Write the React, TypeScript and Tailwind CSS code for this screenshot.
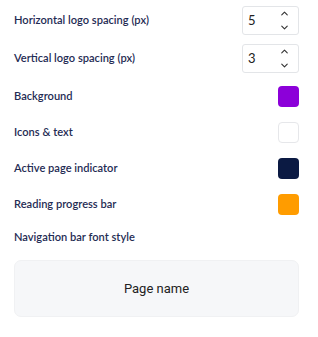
import { ChevronUp, ChevronDown } from 'lucide-react'

const NumberField = ({ value }: { value: number }) => (
  <div className="flex h-[29px] w-[57px] items-center justify-between rounded-[3px] border border-[#e3e5e8] bg-white pl-[5px] pr-[8px]">
    <span className="text-[13px] text-[#222]">{value}</span>
    <div className="flex flex-col items-center gap-[3px] text-[#333]">
      <ChevronUp size={11} strokeWidth={2.4} />
      <ChevronDown size={11} strokeWidth={2.4} />
    </div>
  </div>
)

const Swatch = ({ color, bordered }: { color: string; bordered?: boolean }) => (
  <div
    className={`h-[21px] w-[21px] rounded-[4px] ${bordered ? 'border border-[#e6e7ea]' : ''}`}
    style={{ backgroundColor: color }}
  />
)

const Label = ({ children }: { children: React.ReactNode }) => (
  <span className="text-[11.1px] font-semibold text-[#1f2c54]">{children}</span>
)

const App = () => {
  const colors = [
    { label: 'Background', color: '#8c00d9' },
    { label: 'Icons & text', color: '#ffffff', bordered: true },
    { label: 'Active page indicator', color: '#0b1a43' },
    { label: 'Reading progress bar', color: '#ff9c00' },
  ]

  return (
    <div className="h-[337px] w-[318px] bg-white pl-[14px] pr-[19px] pt-[6px]" style={{ fontFamily: 'Lato, "Open Sans", sans-serif' }}>
      <div className="flex h-[29px] items-center justify-between">
        <Label>Horizontal logo spacing (px)</Label>
        <NumberField value={5} />
      </div>
      <div className="mt-[9px] flex h-[29px] items-center justify-between">
        <Label>Vertical logo spacing (px)</Label>
        <NumberField value={3} />
      </div>

      <div className="mt-[13px] flex flex-col gap-[15px]">
        {colors.map((c) => (
          <div key={c.label} className="flex h-[21px] items-center justify-between">
            <Label>{c.label}</Label>
            <Swatch color={c.color} bordered={c.bordered} />
          </div>
        ))}
      </div>

      <div className="mt-[12px] flex h-[20px] items-center">
        <Label>Navigation bar font style</Label>
      </div>

      <div className="mt-[13px] flex h-[57px] items-center justify-center rounded-[7px] border border-[#f0f1f3] bg-[#f6f7f9]">
        <span className="text-[13px] text-[#222]" style={{ fontFamily: 'Roboto, sans-serif' }}>Page name</span>
      </div>
    </div>
  )
}

export default App
